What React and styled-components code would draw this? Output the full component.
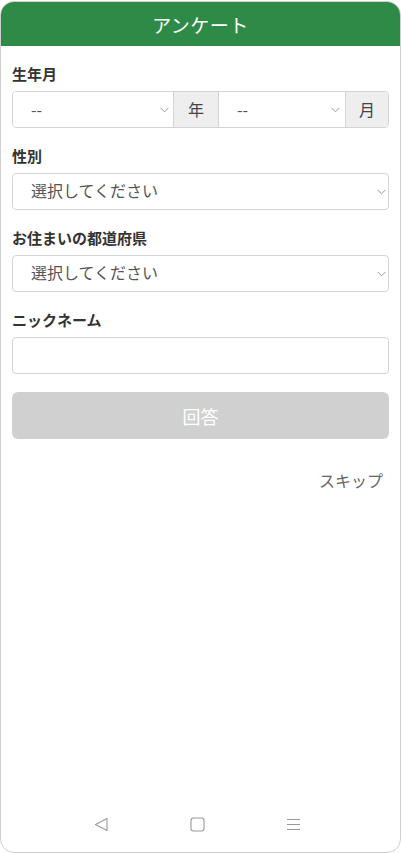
import React from "react";
import styled, { createGlobalStyle } from "styled-components";

const Global = createGlobalStyle`
  html, body { margin: 0; padding: 0; background: #fff; }
  body { font-family: "Noto Sans CJK JP", "Noto Sans", sans-serif; }
  * { box-sizing: border-box; }
`;

const Frame = styled.div`
  width: 401px;
  height: 852px;
  margin-top: 1px;
  border: 1px solid #cfcfcf;
  border-radius: 14px;
  overflow: hidden;
  display: flex;
  flex-direction: column;
  background: #fff;
`;

const Header = styled.header`
  height: 44px;
  flex: none;
  background: #2e8b47;
  color: #fff;
  font-size: 19px;
  display: flex;
  align-items: center;
  justify-content: center;
  letter-spacing: 0.5px;
`;

const Content = styled.main`
  flex: 1;
  padding: 17px 11px 0 11px;
  display: flex;
  flex-direction: column;
`;

const Field = styled.section`
  display: flex;
  flex-direction: column;
  margin-bottom: 17px;
`;

const Label = styled.div`
  font-size: 15px;
  font-weight: 700;
  color: #333;
  line-height: 22px;
  margin-bottom: 6px;
`;

const Row = styled.div`
  display: flex;
  height: 37px;
  border: 1px solid #d4d4d4;
  border-radius: 4px;
  overflow: hidden;
`;

const InlineSelect = styled.div`
  position: relative;
  flex: ${(p) => (p.$w ? `0 0 ${p.$w}px` : "1")};
  display: flex;
  align-items: center;
  padding-left: 18px;
  padding-bottom: 2px;
  color: #555;
  font-size: 16px;
  background: #fff;
`;

const Select = styled.div`
  position: relative;
  flex: none;
  height: 37px;
  display: flex;
  align-items: center;
  padding-left: 18px;
  padding-bottom: 3px;
  color: #555;
  font-size: 16px;
  background: #fff;
  border: 1px solid #d4d4d4;
  border-radius: 4px;
`;

const Chevron = styled.svg`
  position: absolute;
  right: ${(p) => p.$right}px;
  top: 50%;
  margin-top: -3px;
  width: 9px;
  height: 6px;
`;

const Addon = styled.div`
  width: ${(p) => p.$w}px;
  flex: none;
  background: #eeeeee;
  border-left: 1px solid #d4d4d4;
  border-right: ${(p) => (p.$last ? "none" : "1px solid #d4d4d4")};
  display: flex;
  align-items: center;
  justify-content: center;
  padding-bottom: 2px;
  color: #444;
  font-size: 16px;
`;

const TextInput = styled.div`
  height: 37px;
  border: 1px solid #d4d4d4;
  border-radius: 4px;
  background: #fff;
`;

const SubmitButton = styled.button`
  margin-top: 1px;
  height: 47px;
  flex: none;
  border: none;
  border-radius: 6px;
  background: #d0d0d0;
  color: #fff;
  font-size: 18px;
  font-family: inherit;
`;

const Skip = styled.div`
  align-self: flex-end;
  margin-top: 29px;
  margin-right: 6px;
  color: #666;
  font-size: 16px;
`;

const NavBar = styled.nav`
  height: 56px;
  flex: none;
  display: flex;
  justify-content: center;
  gap: 79px;
  align-items: flex-start;
  padding-top: 20px;
  padding-right: 6px;
`;

const NavIcon = styled.svg`
  width: 17px;
  height: 17px;
`;

const Down = ({ right = 5 }) => (
  <Chevron $right={right} viewBox="0 0 9 6">
    <path d="M0.5 0.8 L4.5 4.8 L8.5 0.8" fill="none" stroke="#999" strokeWidth="1" />
  </Chevron>
);

export default function App() {
  return (
    <>
      <Global />
      <Frame>
        <Header>アンケート</Header>
        <Content>
          <Field>
            <Label>生年月</Label>
            <Row>
              <InlineSelect $w={160}>
                --
                <Down right={4} />
              </InlineSelect>
              <Addon $w={46}>年</Addon>
              <InlineSelect>
                --
                <Down right={5} />
              </InlineSelect>
              <Addon $w={43} $last>月</Addon>
            </Row>
          </Field>
          <Field>
            <Label>性別</Label>
            <Select>
              選択してください
              <Down right={2} />
            </Select>
          </Field>
          <Field>
            <Label>お住まいの都道府県</Label>
            <Select>
              選択してください
              <Down right={2} />
            </Select>
          </Field>
          <Field>
            <Label>ニックネーム</Label>
            <TextInput />
          </Field>
          <SubmitButton>回答</SubmitButton>
          <Skip>スキップ</Skip>
        </Content>
        <NavBar>
          <NavIcon viewBox="0 0 17 17">
            <path d="M14 2.5 L2.5 8.5 L14 14.5 Z" fill="none" stroke="#999" strokeWidth="1.1" strokeLinejoin="round" />
          </NavIcon>
          <NavIcon viewBox="0 0 17 17">
            <rect x="2" y="2" width="13" height="13" rx="2.5" fill="none" stroke="#999" strokeWidth="1.1" />
          </NavIcon>
          <NavIcon viewBox="0 0 17 17">
            <path d="M2 3.5 H15 M2 8.5 H15 M2 13.5 H15" stroke="#999" strokeWidth="1.1" />
          </NavIcon>
        </NavBar>
      </Frame>
    </>
  );
}
